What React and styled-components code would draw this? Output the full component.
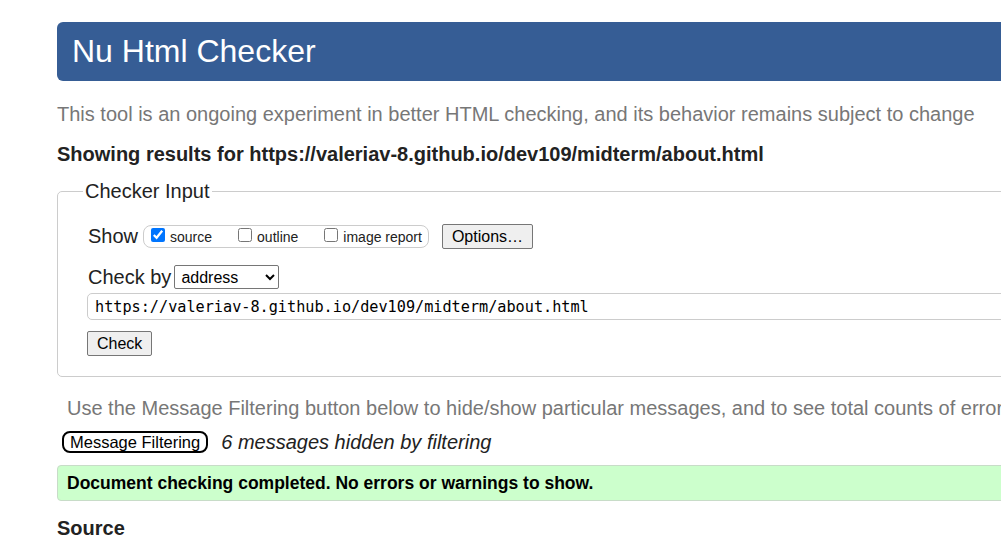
import React from 'react';
import styled, { createGlobalStyle } from 'styled-components';

const GlobalStyle = createGlobalStyle`
  html, body {
    margin: 0;
    padding: 0;
    overflow: hidden;
    background: #fff;
  }
  body {
    font-family: "Liberation Sans", Arial, sans-serif;
    color: #222;
  }
`;

const Page = styled.div`
  width: 1150px;
  padding: 22px 0 0 57px;
`;

const Header = styled.h1`
  margin: 0;
  height: 59px;
  box-sizing: border-box;
  padding: 11px 15px 0 15px;
  background: #365d95;
  color: #fff;
  font-size: 32px;
  font-weight: normal;
  line-height: 37px;
  border-radius: 6px 0 0 6px;
`;

const Intro = styled.p`
  margin: 22px 0 0 0;
  font-size: 20px;
  line-height: 23px;
  color: #777;
`;

const ResultsFor = styled.p`
  margin: 17px 0 0 0;
  font-size: 20px;
  line-height: 23px;
  font-weight: bold;
  color: #222;
`;

const Fieldset = styled.fieldset`
  margin: 14px 0 0 0;
  padding: 21px 0 20px 25px;
  border: 1px solid #ccc;
  border-radius: 5px;
  min-width: 0;
`;

const Legend = styled.legend`
  padding: 0 2px;
  font-size: 20px;
  line-height: 23px;
  color: #222;
`;

const Inner = styled.div`
  padding-left: 4px;
  display: flex;
  flex-direction: column;
  align-items: flex-start;
`;

const Row = styled.div`
  display: flex;
  align-items: center;
  height: ${p => p.$h}px;
  margin-top: ${p => p.$mt || 0}px;
  font-size: 20px;
  color: #222;
`;

const Label = styled.span`
  padding-left: 1px;
`;

const ShowGroup = styled.span`
  display: inline-flex;
  align-items: center;
  height: 23px;
  box-sizing: border-box;
  margin-left: 5px;
  padding: 0 6px 0 4px;
  border: 1px solid #ccc;
  border-radius: 8px;
  font-size: 14px;
  gap: 23px;
`;

const Check = styled.label`
  display: inline-flex;
  align-items: center;
  color: #222;

  input {
    margin: 0 5px 3px 3px;
    width: 14px;
    height: 14px;
  }
`;

const Button = styled.button`
  font-family: "Liberation Sans", Arial, sans-serif;
  font-size: 16px;
  color: #000;
  height: 25px;
  box-sizing: border-box;
  padding: 0 9px;
  margin-left: ${p => p.$ml || 0}px;
  margin-top: ${p => p.$mt || 0}px;
  background: #efefef;
  border: 1px solid #767676;
  border-radius: 2px;
`;

const Select = styled.select`
  font-family: "Liberation Sans", Arial, sans-serif;
  font-size: 16px;
  color: #000;
  width: 105px;
  height: 24px;
  margin-left: 3px;
  padding: 0 2px;
  border: 1px solid #767676;
  border-radius: 2px;
  background: #fff;
`;

const UrlInput = styled.input`
  display: block;
  margin-top: 4px;
  width: 1000px;
  height: 27px;
  box-sizing: border-box;
  padding: 0 7px;
  border: 1px solid #ccc;
  border-radius: 5px;
  font-family: "DejaVu Sans Mono", "Liberation Mono", monospace;
  font-size: 15.2px;
  color: #000;
  outline: none;
`;

const FilterNote = styled.p`
  margin: 20px 0 0 0;
  padding-left: 10px;
  font-size: 20px;
  line-height: 23px;
  color: #777;
  white-space: nowrap;
`;

const FilterRow = styled.div`
  display: flex;
  align-items: center;
  margin-top: 11px;
  padding-left: 5px;
  height: 22px;
`;

const FilterButton = styled.button`
  font-family: "Liberation Sans", Arial, sans-serif;
  font-size: 16.5px;
  color: #000;
  height: 22px;
  box-sizing: border-box;
  padding: 0 6px;
  background: #fff;
  border: 2px solid #000;
  border-radius: 8px;
  line-height: 18px;
`;

const HiddenCount = styled.em`
  margin-left: 13px;
  font-size: 20px;
  color: #222;
`;

const Success = styled.div`
  margin-top: 12px;
  height: 36px;
  box-sizing: border-box;
  padding-left: 9px;
  border: 1px solid #c8dcc8;
  border-radius: 4px;
  background: #ccffcc;
  font-size: 17.5px;
  font-weight: bold;
  line-height: 34px;
  color: #000;
`;

const SourceHeading = styled.h2`
  margin: 16px 0 0 0;
  font-size: 20px;
  line-height: 23px;
  font-weight: bold;
  color: #222;
`;

const url = 'https://valeriav-8.github.io/dev109/midterm/about.html';

export default function App() {
  return (
    <>
      <GlobalStyle />
      <Page>
        <Header>Nu Html Checker</Header>
        <Intro>
          This tool is an ongoing experiment in better HTML checking, and its behavior remains subject to change
        </Intro>
        <ResultsFor>Showing results for {url}</ResultsFor>
        <Fieldset>
          <Legend>Checker Input</Legend>
          <Inner>
            <Row $h={25}>
              <Label>Show</Label>
              <ShowGroup>
                <Check><input type="checkbox" defaultChecked />source</Check>
                <Check><input type="checkbox" />outline</Check>
                <Check><input type="checkbox" />image report</Check>
              </ShowGroup>
              <Button $ml={13}>Options…</Button>
            </Row>
            <Row $h={24} $mt={16}>
              <Label>Check by</Label>
              <Select defaultValue="address">
                <option value="address">address</option>
                <option value="file">file upload</option>
                <option value="text">text input</option>
              </Select>
            </Row>
            <UrlInput type="url" defaultValue={url} />
            <Button $mt={11}>Check</Button>
          </Inner>
        </Fieldset>
        <FilterNote>
          Use the Message Filtering button below to hide/show particular messages, and to see total counts of errors and warnings.
        </FilterNote>
        <FilterRow>
          <FilterButton>Message Filtering</FilterButton>
          <HiddenCount>6 messages hidden by filtering</HiddenCount>
        </FilterRow>
        <Success>Document checking completed. No errors or warnings to show.</Success>
        <SourceHeading>Source</SourceHeading>
      </Page>
    </>
  );
}
